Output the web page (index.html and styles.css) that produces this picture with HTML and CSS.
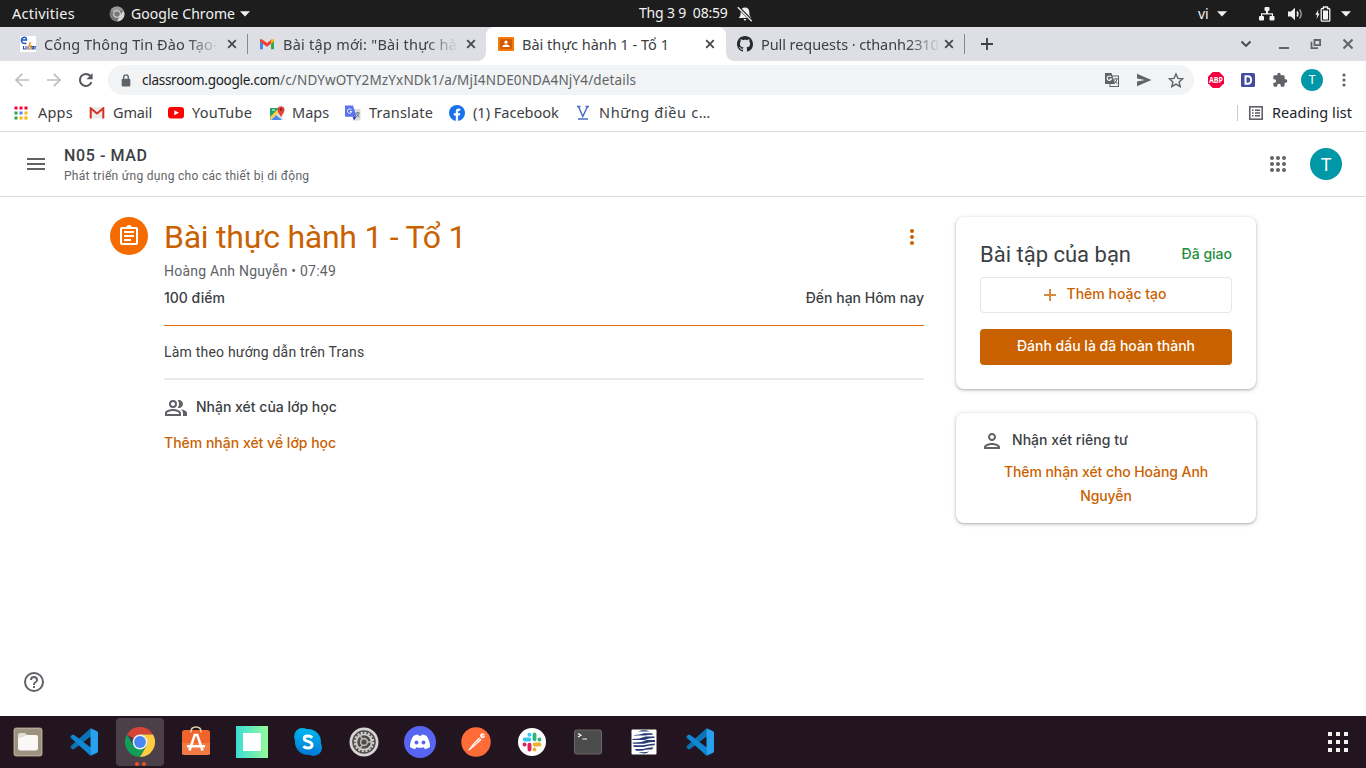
FILE: index.html
```html
<!DOCTYPE html>
<html lang="vi">
<head>
<meta charset="utf-8">
<title>Bài thực hành 1 - Tổ 1</title>
<link rel="stylesheet" href="styles.css">
</head>
<body>
<svg class="defs" aria-hidden="true">
  <symbol id="caret" viewBox="0 0 10 6"><path d="M0 .3h10L5 5.6z" fill="#f2f2f2"/></symbol>
  <symbol id="close" viewBox="0 0 10 10"><path d="M1.2 1.2l7.6 7.6M8.8 1.2L1.2 8.8" stroke="#45474b" stroke-width="1.8"/></symbol>
  <symbol id="vscode" viewBox="0 0 28 28">
    <path d="M20.500.3L.6 18.300v1.400L2.300 21.300l1.300.1L21 8.200z" fill="#0b72b5"/>
    <path d="M20.500 27.700L.6 9.700V8.300L2.300 6.700l1.300-.1L21 19.800z" fill="#1087d2"/>
    <path d="M20.500.300L27.300 3.300l.7 1v19.400l-.7 1-6.800 3z" fill="#27a1ee"/>
  </symbol>
</svg>

<header class="sysbar">
  <div class="sys-left">
    <span class="t-act">Activities</span>
    <svg class="sys-chrome" width="16" height="16" viewBox="0 0 16 16"><circle cx="8" cy="8" r="7.500" fill="#777"/><path d="M8 8L1.500 4.200A7.500 7.500 0 0 1 14.500 4.500H8z" fill="#999"/><path d="M14.600 4.500A7.500 7.500 0 0 1 8 15.500l3.200-6z" fill="#d6d6d6"/><circle cx="8" cy="8" r="3.800" fill="#ddd"/><circle cx="8" cy="8" r="2.800" fill="#777"/></svg>
    <span class="t-chrome">Google Chrome</span>
    <svg class="sys-caret" width="10" height="6"><use href="#caret"/></svg>
  </div>
  <div class="sys-mid">
    <span class="t-clock">Thg 3 9&nbsp; 08:59</span>
    <svg width="16" height="16" viewBox="0 0 16 16"><path d="M8 1.500c-2.800 0-4.300 2-4.300 4.700 0 3.300-.7 4.300-2.200 5.800h13c-1.500-1.500-2.200-2.500-2.200-5.800C12.300 3.500 10.800 1.500 8 1.500zM6.500 13h3L8 15z" fill="#eee"/><path d="M.8.800l14.500 14.500" stroke="#1d1d1d" stroke-width="3"/><path d="M.8 1.200l14 14" stroke="#eee" stroke-width="1.300"/></svg>
  </div>
  <div class="sys-right">
    <span class="t-vi">vi</span>
    <svg class="c1" width="10" height="6"><use href="#caret"/></svg>
    <svg class="c2" width="16" height="14" viewBox="0 0 16 14" fill="#f2f2f2"><rect x="5.500" width="5" height="4" rx="1"/><rect x="0" y="9" width="5" height="4.500" rx="1"/><rect x="10.500" y="9" width="5" height="4.500" rx="1"/><path d="M2 9.500V6.200h5V4h2v2.200h5v3.300h-1.200V7.400H3.200v2.100z"/></svg>
    <svg class="c3" width="15" height="14" viewBox="0 0 15 14"><path d="M0 4.500h3L7 .8v12.400L3 9.500H0z" fill="#f2f2f2"/><path d="M9 4.500q1.800 2.500 0 5" fill="none" stroke="#eee" stroke-width="1.500"/><path d="M11.500 2.500q3.500 4.500 0 9" fill="none" stroke="#aaa" stroke-width="1.300"/></svg>
    <svg class="c4" width="16" height="16" viewBox="0 0 16 16"><path d="M3.500 3.500L.3 8.700h1.900L1.600 13l3-5.500H2.800z" fill="#f2f2f2"/><path d="M7 2.500h1.500V1h4v1.500H14q.8 0 .8 1v10.700q0 1-.8 1H7q-.8 0-.8-1V3.500q0-1 .8-1z" fill="none" stroke="#f2f2f2" stroke-width="1.300"/><rect x="8" y="4.500" width="5" height="9" fill="#f2f2f2"/></svg>
    <svg class="c5" width="10" height="6"><use href="#caret"/></svg>
  </div>
</header>

<nav class="tabs">
  <div class="tab tab1">
    <svg class="fav" width="16" height="16" viewBox="0 0 16 16"><rect width="16" height="16" fill="#fff"/><path d="M1.500 4h5Q6.500 1 4 1.200 1 2 1.500 5T6.500 7.500" fill="none" stroke="#2559c4" stroke-width="1.500"/><path d="M10.500 6l-1.500 4h2l-1.500 4" stroke="#f39a21" stroke-width="1.500" fill="none"/><path d="M3.500 10v3h2.500v-3M8 10.500v3M12 10.500h1.500v2.500H12zM15 13.500v-3h1" fill="none" stroke="#2d4ca4" stroke-width="1.100"/></svg>
    <span class="tab-text fade t-t1">Cổng Thông Tin Đào Tạo-</span>
    <svg width="10" height="10"><use href="#close"/></svg>
  </div>
  <div class="tab tab2">
    <svg class="fav" width="16" height="16" viewBox="0 0 16 16"><path d="M1 4v9.300h3V7z" fill="#4285f4"/><path d="M15 4v9.300h-3V7z" fill="#34a853"/><path d="M12 4.500l2-1.400q1-.3 1 1.400L12 8z" fill="#fbbc04"/><path d="M1 4.500Q1 2.500 2.800 3.300L8 7l5-3.700V7L8 10.800 4 8 1 5.800z" fill="#ea4335"/><path d="M12 4.600l1.500-1.200Q15 3 15 5l-3 2.700z" fill="#fbbc04"/></svg>
    <span class="tab-text fade t-t2">Bài tập mới: "Bài thực hà</span>
    <svg width="10" height="10"><use href="#close"/></svg>
  </div>
  <div class="tab tab3">
    <svg class="fav" width="16" height="14" viewBox="0 0 16 14"><rect width="16" height="14" rx="1" fill="#f57c00"/><rect x="2" y="2" width="12" height="10" fill="#d15b00"/><circle cx="8" cy="5.200" r="1.600" fill="#fff"/><path d="M4.300 10V9.300Q5 7.700 8 7.600t3.700 1.700v.7z" fill="#fff"/></svg>
    <span class="tab-text t-t3">Bài thực hành 1 - Tổ 1</span>
    <svg width="10" height="10"><use href="#close"/></svg>
  </div>
  <div class="tab tab4">
    <svg class="fav" width="16" height="16" viewBox="0 0 16 16"><path fill="#24292f" d="M8 0C3.580 0 0 3.580 0 8c0 3.540 2.290 6.530 5.470 7.590.4.070.55-.17.55-.38 0-.19-.01-.82-.01-1.490-2.010.37-2.530-.49-2.690-.94-.09-.23-.48-.94-.82-1.130-.28-.15-.68-.52-.01-.53.63-.01 1.080.58 1.230.82.72 1.210 1.870.87 2.330.66.07-.52.28-.87.51-1.070-1.780-.2-3.640-.89-3.640-3.950 0-.87.31-1.590.82-2.150-.08-.2-.36-1.020.08-2.120 0 0 .67-.21 2.200.82.64-.18 1.320-.27 2-.27s1.360.09 2 .27c1.530-1.040 2.200-.82 2.200-.82.44 1.100.16 1.920.08 2.120.51.56.82 1.270.82 2.150 0 3.070-1.870 3.750-3.650 3.950.29.25.54.73.54 1.480 0 1.070-.01 1.930-.01 2.200 0 .21.15.46.55.38A8.013 8.013 0 0 0 16 8c0-4.420-3.580-8-8-8z"/></svg>
    <span class="tab-text fade t-t4">Pull requests · cthanh2310</span>
    <svg width="10" height="10"><use href="#close"/></svg>
  </div>
  <div class="tabs-new"><svg width="12" height="12" viewBox="0 0 12 12"><path d="M6 0v12M0 6h12" stroke="#3c4043" stroke-width="1.800"/></svg></div>
  <div class="win">
    <svg width="12" height="8" viewBox="0 0 12 8"><path d="M1.500 1.500L6 6l4.500-4.500" fill="none" stroke="#45474b" stroke-width="1.900"/></svg>
    <svg width="12" height="12" viewBox="0 0 12 12"><path d="M1 10h10" stroke="#606266" stroke-width="2"/></svg>
    <svg width="12" height="12" viewBox="0 0 12 12" fill="none" stroke="#606266" stroke-width="1.800"><path d="M4.500 2h5.600v5.200H4.500zM1.500 3.800v6.300H8"/></svg>
    <svg width="12" height="12" viewBox="0 0 12 12"><path d="M1.500 1.500l9 9M10.500 1.500l-9 9" stroke="#606266" stroke-width="2"/></svg>
  </div>
</nav>

<div class="toolbar">
  <div class="nav">
    <svg width="16" height="16" viewBox="0 0 16 16" fill="none" stroke="#bdbec1" stroke-width="1.700"><path d="M15 8H2.200M8.300 1.800L2 8l6.300 6.200"/></svg>
    <svg width="16" height="16" viewBox="0 0 16 16" fill="none" stroke="#bdbec1" stroke-width="1.700"><path d="M1 8h12.800M7.700 1.800L14 8l-6.300 6.200"/></svg>
    <svg width="16" height="16" viewBox="0 0 16 16"><path d="M13.500 10.200A6 6 0 1 1 12.400 4" fill="none" stroke="#55585d" stroke-width="2"/><path d="M14.600 1v6.200H8.500z" fill="#55585d"/></svg>
  </div>
  <div class="omnibox">
    <svg class="lock" width="10" height="13" viewBox="0 0 10 13"><rect x=".7" y="4.800" width="8.600" height="7.700" rx="1" fill="#5f6368"/><path d="M2.700 5V3.200a2.300 2.300 0 0 1 4.600 0V5" fill="none" stroke="#5f6368" stroke-width="1.400"/></svg>
    <span class="url"><span class="host">classroom.google.com</span><span class="path">/c/NDYwOTY2MzYxNDk1/a/MjI4NDE0NDA4NjY4/details</span></span>
    <svg class="o1" width="16" height="16" viewBox="0 0 16 16"><rect x="6" y="4" width="8.500" height="10.500" fill="#f1f3f4" stroke="#5f6368"/><path d="M1 1h6.500l3.500 11H2q-1 0-1-1z" fill="#5f6368"/><path d="M7.200 5A2.200 2.200 0 1 0 7.400 7H5.500" fill="none" stroke="#fff" stroke-width="1.100"/><path d="M9.500 7h4.500M11.800 6v1M13 7.500q-.8 2.500-2.800 4M10.500 8.500q1 2 3 3" fill="none" stroke="#5f6368"/></svg>
    <svg class="o2" width="16" height="14" viewBox="0 0 16 14"><path d="M1 .8L15.300 7 1 13.200V8.500L9 7 1 5.500z" fill="#5f6368"/></svg>
    <svg class="o3" width="16" height="16" viewBox="1 0 23 23"><path d="M12.500 2.800l2.800 6.400 6.700.6-5.100 4.600 1.600 6.700-6-3.600-6 3.600 1.600-6.700L3 9.800l6.700-.6z" fill="none" stroke="#5f6368" stroke-width="2"/></svg>
  </div>
  <div class="ext">
    <svg width="16" height="16" viewBox="0 0 16 16"><path d="M4.700 0h6.600L16 4.700v6.600L11.300 16H4.700L0 11.300V4.700z" fill="#f5003d"/><text x="8" y="11" class="abp" textLength="14" lengthAdjust="spacingAndGlyphs">ABP</text></svg>
    <svg width="16" height="16" viewBox="0 0 16 16"><rect x="1" y="1" width="14" height="14" rx="1.500" fill="#444ba0"/><path d="M5.500 4.200h2.300q3.300 0 3.300 3.800T7.800 11.800H5.500z" fill="none" stroke="#fff" stroke-width="2"/></svg>
    <svg width="16" height="16" viewBox="0 0 24 24"><path fill="#5f6368" d="M20.500 11H19V7c0-1.100-.9-2-2-2h-4V3.500a2.500 2.500 0 0 0-5 0V5H4c-1.100 0-2 .9-2 2v3.800h1.500a2.700 2.700 0 0 1 0 5.400H2V20c0 1.100.9 2 2 2h3.800v-1.500a2.700 2.700 0 0 1 5.400 0V22H17c1.100 0 2-.9 2-2v-4h1.500a2.500 2.500 0 0 0 0-5z"/></svg>
    <span class="avatar small">T</span>
    <svg class="kebab" width="4" height="14" viewBox="0 0 4 14" fill="#5f6368"><circle cx="2" cy="2" r="1.600"/><circle cx="2" cy="7" r="1.600"/><circle cx="2" cy="12" r="1.600"/></svg>
  </div>
</div>

<div class="bookmarks">
  <a class="bm b1"><svg width="14" height="14" viewBox="0 0 14 14"><path d="M.5.500h3v3h-3zm5 0h3v3h-3zm5 0h3v3h-3z" fill="#f5003d"/><path d="M.5 5.500h3v3h-3zm0 5h3v3h-3z" fill="#2ca24c"/><path d="M5.500 5.500h3v3h-3z" fill="#4285f4"/><path d="M10.500 5.500h3v3h-3zm-5 5h3v3h-3zm5 0h3v3h-3z" fill="#fbb503"/></svg><span>Apps</span></a>
  <a class="bm b2"><svg width="16" height="12" viewBox="0 0 16 12"><path d="M1 0h14v11.500H1z" fill="#ececec"/><path d="M1.700 11.500V1.300L8 6.500l6.300-5.200v10.200" fill="none" stroke="#d93025" stroke-width="2"/></svg><span>Gmail</span></a>
  <a class="bm b3"><svg width="16" height="12" viewBox="0 0 16 12"><rect width="16" height="11.500" rx="3" fill="#f00"/><path d="M6.300 3.300v5L11 5.800z" fill="#fff"/></svg><span>YouTube</span></a>
  <a class="bm b4"><svg width="16" height="16" viewBox="0 0 16 16"><path d="M1 3h11v12H1z" fill="#1fa463"/><path d="M1 14.500L11 5l3 10H2z" fill="#e0e0e0"/><path d="M2 15l5-5 6 5z" fill="#4a89f3"/><path d="M1 12l8-8 2 2-9 9z" fill="#ffd04b"/><path d="M12 12Q8 6.500 8.500 4a3.600 3.600 0 0 1 7 0Q16 6.500 12 12z" fill="#e3453a"/><circle cx="12" cy="4.500" r="1.300" fill="#7c2020"/><path d="M3 5h3" stroke="#fff"/></svg><span>Maps</span></a>
  <a class="bm b5"><svg width="16" height="16" viewBox="0 0 16 16"><path d="M6 4h9.500v11.500H9z" fill="#dcdcdc"/><path d="M0 .5h8l3.500 11.300H1q-1 0-1-1z" fill="#5b72ee"/><path d="M7.500 11.800h4L9 15.500z" fill="#3c43b6"/><path d="M6.500 4.900A2.200 2.200 0 1 0 6.800 6.500H5" fill="none" stroke="#fff"/><path d="M10.500 8h4.300M12.500 7v1M13.800 8.500q-1 2.500-2.500 3.500M11.500 9q1 2 3 3" fill="none" stroke="#60767f"/></svg><span>Translate</span></a>
  <a class="bm b6"><svg width="16" height="16" viewBox="0 0 16 16"><circle cx="8" cy="8" r="8" fill="#1773ea"/><path d="M6.800 16v-5.400H4.800V8.200h2V6.500q0-3 2.800-3 1 0 1.700.2v2h-1q-1.200 0-1.200 1.200v1.300h2.200l-.4 2.400H9.100V16z" fill="#fff"/></svg><span>(1) Facebook</span></a>
  <a class="bm b7"><svg width="12" height="16" viewBox="0 0 12 16" fill="none" stroke="#456fc4"><path d="M1.500 1.500L5.800 11.500 10.500 1.500" stroke-width="1.500"/><path d="M0 1.500h3.500M8.500 1.500H12M1 14h10" stroke-width="1.300"/></svg><span>Những điều c…</span></a>
  <a class="bm reading"><svg width="14" height="14" viewBox="0 0 14 14" fill="none" stroke="#55585d"><rect x=".8" y=".8" width="12.400" height="12.400" stroke-width="1.500"/><path d="M3 4.200h1.500M6 4.200h5M3 7h1.500M6 7h5M3 9.800h1.500M6 9.800h5" stroke-width="1.500"/></svg><span>Reading list</span></a>
</div>

<div class="page">
  <header class="apphead">
    <svg width="18" height="12" viewBox="0 0 18 12"><path d="M0 1h18M0 6h18M0 11h18" stroke="#5f6368" stroke-width="2"/></svg>
    <div class="course"><div class="name">N05 - MAD</div><div class="sub">Phát triển ứng dụng cho các thiết bị di động</div></div>
    <svg class="apps" width="16" height="16" viewBox="0 0 16 16" fill="#5f6368"><circle cx="2" cy="2" r="2"/><circle cx="8" cy="2" r="2"/><circle cx="14" cy="2" r="2"/><circle cx="2" cy="8" r="2"/><circle cx="8" cy="8" r="2"/><circle cx="14" cy="8" r="2"/><circle cx="2" cy="14" r="2"/><circle cx="8" cy="14" r="2"/><circle cx="14" cy="14" r="2"/></svg>
    <span class="avatar">T</span>
  </header>
  <main class="content">
    <div class="badge"><svg width="24" height="24" viewBox="0 0 24 24" fill="#fff"><path d="M7 15h7v2H7zm0-4h10v2H7zm0-4h10v2H7z"/><path d="M19 3h-4.180C14.400 1.840 13.300 1 12 1s-2.400.84-2.820 2H5c-1.100 0-2 .9-2 2v14c0 1.100.9 2 2 2h14c1.100 0 2-.9 2-2V5c0-1.100-.9-2-2-2zm0 16H5V5h14z"/></svg></div>
    <section class="detail">
      <div class="title-row"><h1>Bài thực hành 1 - Tổ 1</h1><svg width="4" height="16" viewBox="0 0 4 16" fill="#c96100"><circle cx="2" cy="2" r="2"/><circle cx="2" cy="8" r="2"/><circle cx="2" cy="14" r="2"/></svg></div>
      <div class="by">Hoàng Anh Nguyễn • 07:49</div>
      <div class="meta"><span>100 điểm</span><span>Đến hạn Hôm nay</span></div>
      <p class="desc">Làm theo hướng dẫn trên Trans</p>
      <div class="comments"><svg width="24" height="24" viewBox="0 0 24 24" fill="#5f6368"><path d="M15 8c0-1.420-.5-2.730-1.330-3.760.42-.14.860-.24 1.330-.24 2.210 0 4 1.790 4 4s-1.790 4-4 4c-.43 0-.84-.09-1.230-.21-.03-.01-.06-.02-.1-.03A5.980 5.980 0 0 0 15 8zm1.660 5.130C18.030 14.060 19 15.320 19 17v3h4v-3c0-2.180-3.580-3.470-6.340-3.870zM9 6c1.100 0 2 .9 2 2s-.9 2-2 2-2-.9-2-2 .9-2 2-2m0 9c2.700 0 5.800 1.290 6 2v1H3v-.990c.2-.72 3.300-2.010 6-2.010M9 4a4 4 0 1 0 0 8 4 4 0 0 0 0-8zm0 9c-2.670 0-8 1.340-8 4v3h16v-3c0-2.660-5.330-4-8-4z"/></svg><span>Nhận xét của lớp học</span></div>
      <a class="link">Thêm nhận xét về lớp học</a>
    </section>
    <aside class="side">
      <section class="card work">
        <div class="card-head"><h2>Bài tập của bạn</h2><span class="status">Đã giao</span></div>
        <button class="btn outline"><svg width="12" height="12" viewBox="0 0 12 12"><path d="M6 0v12M0 6h12" stroke="#d88a3e" stroke-width="2"/></svg><span>Thêm hoặc tạo</span></button>
        <button class="btn fill"><span>Đánh dấu là đã hoàn thành</span></button>
      </section>
      <section class="card private">
        <div class="private-head"><svg width="24" height="24" viewBox="0 0 24 24" fill="#5f6368"><path d="M12 6c1.100 0 2 .9 2 2s-.9 2-2 2-2-.9-2-2 .9-2 2-2m0 10c2.700 0 5.800 1.290 6 2H6c.23-.72 3.310-2 6-2m0-12C9.790 4 8 5.790 8 8s1.790 4 4 4 4-1.790 4-4-1.790-4-4-4zm0 10c-2.670 0-8 1.340-8 4v2h16v-2c0-2.660-5.330-4-8-4z"/></svg><span>Nhận xét riêng tư</span></div>
        <a class="private-link">Thêm nhận xét cho Hoàng Anh Nguyễn</a>
      </section>
    </aside>
  </main>
  <svg class="help" width="24" height="24" viewBox="0 0 24 24" fill="#5f6368"><path d="M11 18h2v-2h-2zm1-16a10 10 0 1 0 0 20 10 10 0 0 0 0-20zm0 18a8 8 0 1 1 0-16 8 8 0 0 1 0 16zm0-14a4 4 0 0 0-4 4h2c0-1.100.9-2 2-2s2 .9 2 2c0 2-3 1.750-3 5h2c0-2.250 3-2.500 3-5a4 4 0 0 0-4-4z"/></svg>
</div>

<footer class="dock">
  <div class="tile"><svg width="30" height="30" viewBox="0 0 30 30"><rect x=".5" y=".5" width="29" height="29" rx="3" fill="#9b937f"/><rect x="1.500" y="1.500" width="27" height="27" rx="2" fill="none" stroke="#b3ab98"/><path d="M5 8q0-2 2-2h5l2 2v8H5z" fill="#e0dcd4"/><path d="M5 11q4 0 9-3h9q2 0 2 2v11q0 2.500-2.500 2.500h-15Q5 23.500 5 21z" fill="#faf8f6"/></svg></div>
  <div class="tile"><svg width="28" height="28"><use href="#vscode"/></svg></div>
  <div class="tile active"><svg width="30" height="30" viewBox="0 0 30 30"><path d="M15 15L2 7.500A15 15 0 0 1 28 7.500H15z" fill="#d64437"/><path d="M15 15l-6.500 3.800L2 7.500A15 15 0 0 0 15 30l6.500-11.200z" fill="#129d58"/><path d="M28 7.500A15 15 0 0 1 15 30l6.500-11.200L15 7.500z" fill="#ffcd41"/><circle cx="15" cy="15" r="7.400" fill="#f1f1f1"/><circle cx="15" cy="15" r="5.900" fill="#4687f4"/></svg><i class="dots"><b></b><b></b></i></div>
  <div class="tile"><svg width="30" height="32" viewBox="0 0 30 32"><rect x="1" y="4" width="28" height="25" rx="2.500" fill="#f0632a"/><path d="M1 17h28v9.500q0 2.500-2.500 2.500h-23Q1 29 1 26.500z" fill="#f47a45"/><path d="M10 6.500Q9.500 1 15 1t5 5.500" fill="none" stroke="#e8cfae" stroke-width="1.500"/><path d="M8.500 24.500L13.700 9h2.600l5.200 15.500M6 20.200h18" fill="none" stroke="#fff" stroke-width="2.500"/></svg></div>
  <div class="tile"><svg width="32" height="32" viewBox="0 0 32 32"><defs><linearGradient id="mint"><stop stop-color="#3cddd5"/><stop offset="1" stop-color="#93fb9a"/></linearGradient></defs><rect width="32" height="32" fill="url(#mint)"/><rect x="7" y="7" width="18" height="18" fill="#fff"/></svg></div>
  <div class="tile"><svg width="30" height="30" viewBox="0 0 30 30"><defs><linearGradient id="sky" x2="0" y2="1"><stop stop-color="#00b7f0"/><stop offset="1" stop-color="#0078d4"/></linearGradient></defs><g fill="url(#sky)"><circle cx="9.500" cy="9.500" r="8.500"/><circle cx="20.500" cy="20.500" r="8.500"/><circle cx="15" cy="15" r="13"/></g><path d="M19.300 10.800Q17.500 9 14.700 9q-3.500 0-3.500 2.500 0 2 3.600 2.900 4.300 1 4.300 3.600 0 3-4 3-3 0-4.800-1.800" fill="none" stroke="#fff" stroke-width="2.900"/></svg></div>
  <div class="tile"><svg width="30" height="30" viewBox="0 0 30 30"><circle cx="15" cy="15" r="14.500" fill="#d6d5d4"/><circle cx="15" cy="15" r="11.800" fill="#4c4b4a"/><circle cx="15" cy="15" r="9.300" fill="none" stroke="#cfcecd" stroke-width="2" stroke-dasharray="2.200 1.452"/><circle cx="15" cy="15" r="7.700" fill="none" stroke="#cfcecd" stroke-width="1.800"/><circle cx="15" cy="15" r="3.400" fill="none" stroke="#b8b7b6" stroke-width="1.600"/><path d="M18 15h4.500M13.300 12.200l-2.200-3.700M13.300 17.800l-2.200 3.700" stroke="#b8b7b6" stroke-width="1.500"/></svg></div>
  <div class="tile"><svg width="32" height="32" viewBox="0 0 32 32"><circle cx="16" cy="16" r="16" fill="#5765f2"/><path d="M9.500 9.800Q11.500 8.800 14 8.500l.7 1.300h2.600l.7-1.300q2.500.3 4.500 1.300 3.700 5.300 3.500 11.200-2 1.500-5 2.300l-1.300-2.100q-3.700 1-7.400 0L11 23.300q-3-.8-5-2.300-.2-5.900 3.500-11.200z" fill="#fff"/><ellipse cx="12.500" cy="16.500" rx="1.900" ry="2.100" fill="#5765f2"/><ellipse cx="19.500" cy="16.500" rx="1.900" ry="2.100" fill="#5765f2"/></svg></div>
  <div class="tile"><svg width="30" height="30" viewBox="0 0 31 31"><circle cx="15.500" cy="15.500" r="15.200" fill="#ff6c37"/><path d="M7.300 24.500l.8-1.600 5-6.300L18.700 10.800l2.700 2.400-6.500 5.600-5.600 4.900z" fill="#fff"/><path d="M20 11.800l-6.500 6.500" stroke="#ff6c37" stroke-width=".8"/><circle cx="22.300" cy="9" r="2.500" fill="#fff"/><path d="M21.800 9.400l2.500-.8" stroke="#ff6c37"/></svg></div>
  <div class="tile"><svg width="28" height="28" viewBox="0 0 28 28"><circle cx="14" cy="14" r="14" fill="#fff"/><g fill="none" stroke-width="3.900" stroke-linecap="round"><path d="M6.700 11.500h4.600M11.400 6.700v-.1" stroke="#36c5f0"/><path d="M16.500 6.500v4.800M21.500 11.500h-.1" stroke="#2eb67d"/><path d="M16.700 16.500h4.800M16.500 21.500v-.1" stroke="#ecb22e"/><path d="M11.500 16.700v4.800M6.500 16.500h.1" stroke="#e01e5a"/></g></svg></div>
  <div class="tile"><svg width="28" height="26" viewBox="0 0 28 26"><rect x=".5" y="1" width="27" height="24" rx="2" fill="#4b4b4b" stroke="#696969"/><path d="M4 4.500l3 1.800-3 1.800M8.500 10h4.500" fill="none" stroke="#fff" stroke-width="1.200"/></svg></div>
  <div class="tile"><svg width="26" height="26" viewBox="0 0 26 26"><rect x=".5" y=".5" width="25" height="25" rx="1" fill="#fff"/><path d="M7 2.500l4-1.300h4l4 1.300zM3 6q6-.3 10-1.800l8 0 1 1.600q-4-.3-8 .8H3zM1.500 10q7 0 13-2.500h9v1.600q-5-.4-10 1.900h-12zM1.500 13.500q9 .3 14-2.500h8.500v2q-5-.6-11 1.800H2zM2 16.300h10q5-1 12-1.800l-.5 1.800q-6 0-11 1.700H3zM4 20h8q5-1.500 10.500-1.700L21 20.500q-6-.3-10 1.300H5zM7.500 23q6 .5 11-.5-5 3.500-11 .5z" fill="#263b75"/></svg></div>
  <div class="tile"><svg width="28" height="28"><use href="#vscode"/></svg></div>
  <svg class="grid" width="20" height="20" viewBox="0 0 20 20" fill="#f2f2f0"><path d="M0 0h4v4H0zm8 0h4v4H8zm8 0h4v4h-4zM0 8h4v4H0zm8 0h4v4H8zm8 0h4v4h-4zM0 16h4v4H0zm8 0h4v4H8zm8 0h4v4h-4z"/></svg>
</footer>
</body>
</html>
```
FILE: styles.css
```css
* { box-sizing: border-box; }
body { margin: 0; width: 1366px; height: 768px; overflow: hidden; display: flex; flex-direction: column; background: #fff; font-family: "Noto Sans", "Open Sans", sans-serif; font-size: 14.5px; color: #3c4043; }
svg { display: block; flex: none; }
span { white-space: nowrap; }
.defs { position: absolute; width: 0; height: 0; }

/* System bar */
.sysbar { height: 27px; flex: none; display: grid; grid-template-columns: 639px 1fr 168px; align-items: center; background: #1d1d1d; color: #f2f2f2; line-height: 26px; }
.sys-left, .sys-mid, .sys-right { display: flex; align-items: center; height: 27px; }
.sys-left { padding-left: 12px; }
.t-act { width: 63px; letter-spacing: .26px; margin-top: -2px; }
.sys-chrome { margin: 0 6px 0 34px; }
.t-chrome { width: 104px; font-size: 14px; letter-spacing: .05px; }
.sys-caret { margin-left: 5px; }
.sys-mid { gap: 9px; }
.t-clock { width: 89px; font-size: 14px; letter-spacing: -.2px; margin-top: -1px; }
.t-vi { font-size: 14px; width: 12px; }
.c1 { margin-left: 7px; }
.c2 { margin-left: 32px; }
.c3 { margin-left: 13px; }
.c4 { margin-left: 12px; }
.c5 { margin-left: 10px; }

/* Tab strip */
.tabs { height: 34px; flex: none; display: flex; align-items: stretch; background: #dedfe4; }
.tab { display: flex; align-items: center; position: relative; }
.fav { margin-right: 8px; }
.tab-text { width: 175px; margin-right: 8px; line-height: 32px; overflow: hidden; }
.tab1 { width: 248px; padding-left: 20px; }
.tab2 { width: 238px; padding-left: 11px; }
.tab3 { width: 240px; padding-left: 12px; background: #fff; border-radius: 8px 8px 0 0; }
.tab4 { width: 239px; padding-left: 11px; }
.tab1::after, .tab4::after { content: ""; position: absolute; right: 0; top: 7px; width: 1px; height: 20px; background: #85878b; }
.tab3::before, .tab3::after { content: ""; position: absolute; bottom: 0; width: 8px; height: 8px; }
.tab3::before { left: -8px; background: radial-gradient(circle at 0 0, #dedfe4 7.5px, #fff 8px); }
.tab3::after { right: -8px; background: radial-gradient(circle at 100% 0, #dedfe4 7.5px, #fff 8px); }
.fade { -webkit-mask-image: linear-gradient(90deg, #000 82%, transparent); mask-image: linear-gradient(90deg, #000 82%, transparent); }
.t-t1 { letter-spacing: .1px; }
.t-t2 { letter-spacing: .25px; }
.t-t4 { width: 180px; margin-right: 3px; letter-spacing: -.08px; }
.tabs-new { display: flex; align-items: center; padding-left: 16px; }
.win { margin-left: auto; display: flex; align-items: center; gap: 20px; padding-right: 12px; }
.win svg:first-child { margin-right: 6px; }

/* Toolbar */
.toolbar { height: 38px; flex: none; display: flex; align-items: center; }
.nav { display: flex; gap: 16px; padding-left: 14px; width: 108px; }
.omnibox { width: 1086px; height: 30px; border-radius: 15px; background: #f1f3f4; display: flex; align-items: center; }
.lock { margin: 0 11px 0 13px; }
.url { display: flex; width: 960px; font-size: 13.5px; line-height: 28px; color: #606367; }
.host { width: 138px; letter-spacing: -.27px; color: #202124; }
.path { letter-spacing: .15px; }
.o1 { margin-left: 2px; }
.o2 { margin-left: 16px; }
.o3 { margin-left: 16px; }
.ext { display: flex; align-items: center; padding-left: 14px; gap: 16px; }
.abp { font: 700 8.5px "Open Sans", sans-serif; fill: #fff; text-anchor: middle; }
.avatar { width: 32px; height: 32px; border-radius: 50%; background: #0097a7; color: #fff; font: 400 18px/34px Roboto, sans-serif; text-align: center; }
.avatar.small { width: 22px; height: 22px; font: 400 12px/22px Roboto, sans-serif; margin-left: -3px; }
.kebab { margin-left: 3px; }

/* Bookmarks */
.bookmarks { height: 33px; flex: none; display: flex; align-items: center; padding: 0 14px 5px 14px; border-bottom: 1px solid #dadce0; line-height: 26px; }
.bm { display: flex; align-items: center; flex: none; }
.bm span { margin-top: -2px; }
.b1 { width: 75px; gap: 10px; letter-spacing: .2px; }
.b2 { width: 79px; gap: 8px; letter-spacing: -.15px; }
.b3 { width: 101px; gap: 8px; letter-spacing: .2px; }
.b4 { width: 76px; gap: 7px; }
.b5 { width: 104px; gap: 8px; letter-spacing: .2px; }
.b6 { width: 128px; gap: 8px; }
.b7 { gap: 10px; letter-spacing: .65px; }
.reading { position: relative; margin-left: auto; gap: 9px; color: #202124; letter-spacing: .06px; }
.reading::before { content: ""; position: absolute; left: -12px; top: 4px; width: 1px; height: 16px; background: #c8cacd; }

/* Classroom */
.page { height: 584px; flex: none; position: relative; }
.apphead { height: 65px; display: flex; align-items: center; padding: 0 24px 0 27px; border-bottom: 1px solid #dadce0; }
.course { margin-left: 19px; padding-top: 2px; flex: 1; }
.name { font: 500 16px/22px Roboto, sans-serif; letter-spacing: .6px; }
.sub { font: 400 12px/18px Roboto, sans-serif; letter-spacing: .3px; color: #5f6368; }
.apps { margin-right: 24px; }
.content { display: grid; grid-template-columns: 54px 760px 300px; padding: 20px 0 0 110px; font: 500 14px/20px Inter, sans-serif; }
.badge { width: 38px; height: 38px; border-radius: 50%; background: #f56b00; display: flex; align-items: center; justify-content: center; }
.title-row { height: 40px; display: flex; align-items: center; justify-content: space-between; padding-right: 10px; }
h1 { margin: 0; font: 400 32px/40px Roboto, sans-serif; letter-spacing: -.25px; color: #c96100; }
.by { margin-top: 4px; font: 400 14px/20px Roboto, sans-serif; letter-spacing: .23px; color: #5f6368; }
.meta { margin-top: 7px; height: 38px; display: flex; justify-content: space-between; border-bottom: 1px solid #e06c10; }
.desc { margin: 0; padding-top: 16px; height: 54px; border-bottom: 2px solid #e8eaed; font: 400 14px/20px Roboto, sans-serif; letter-spacing: .2px; }
.comments { display: flex; gap: 8px; align-items: center; margin-top: 16px; height: 24px; }
.comments span { margin-top: -2px; }
.link { display: block; margin-top: 13px; color: #c96100; }
.side { margin-left: 32px; width: 300px; }
.card { border-radius: 8px; background: #fff; box-shadow: 0 1px 2px rgba(60, 64, 67, .3), 0 1px 4px 1px rgba(60, 64, 67, .15); }
.work { height: 172px; padding: 24px 24px 0; }
.card-head { display: flex; align-items: center; justify-content: space-between; height: 28px; margin-bottom: 8px; }
h2 { margin: 0; font: 400 22px/28px Roboto, sans-serif; }
.status { margin-top: -2px; color: #1e8e3e; }
.btn { width: 252px; height: 36px; border-radius: 4px; display: flex; align-items: center; justify-content: center; gap: 11px; font: 500 14px/20px Inter, sans-serif; padding: 0 0 2px; }
.outline { border: 1px solid #e4e6ea; background: #fff; color: #c96100; padding-right: 2px; }
.outline svg { margin-top: 2px; }
.fill { border: 0; margin-top: 16px; background: #c96100; color: #fff; }
.private { height: 110px; margin-top: 24px; padding: 16px 24px 0; }
.private-head { height: 24px; display: flex; align-items: center; gap: 8px; }
.private-head span { margin-top: -2px; letter-spacing: .05px; }
.private-link { display: block; margin-top: 7px; text-align: center; line-height: 24px; color: #c96100; letter-spacing: -.08px; padding: 0 20px; }
.help { position: absolute; left: 22px; bottom: 22px; }

/* Dock */
.dock { height: 52px; flex: none; display: flex; align-items: center; gap: 8px; padding: 0 18px 0 4px; background: #23151f; }
.tile { width: 48px; height: 48px; border-radius: 4px; display: flex; align-items: center; justify-content: center; position: relative; }
.active { background: #4b3f48; }
.dots { position: absolute; left: 19px; bottom: 0; display: flex; gap: 3px; }
.dots b { width: 4px; height: 4px; border-radius: 50%; background: #e95420; }
.grid { margin-left: auto; }
```
